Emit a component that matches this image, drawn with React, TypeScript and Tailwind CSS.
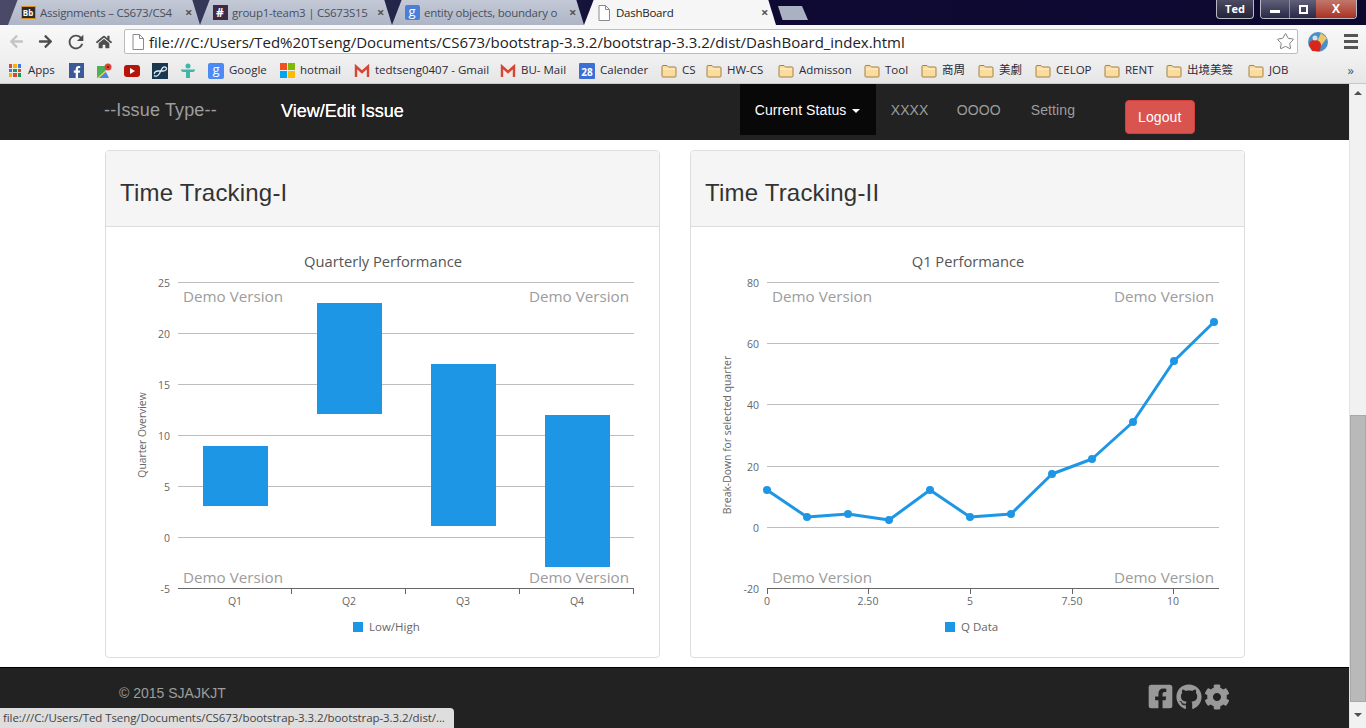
import { FaArrowLeft, FaArrowRight, FaCog, FaFacebookF, FaFacebookSquare, FaGithub, FaHome } from "react-icons/fa";
import { MdRefresh } from "react-icons/md";
import { Star } from "lucide-react";

const ui = "font-['Open_Sans','Noto_Sans_CJK_TC',sans-serif]";
const arial = "font-['Liberation_Sans',Arial,sans-serif]";

function DocIcon() {
  return (
    <svg width="14" height="16" viewBox="0 0 14 16" className="shrink-0">
      <path d="M2 .5h6.500L12.500 4.500V15.500H2Z" fill="#fff" stroke="#8a8a8a" />
      <path d="M8.500 .5V4.500H12.500" fill="none" stroke="#8a8a8a" />
    </svg>
  );
}

function Folder() {
  return (
    <svg width="16" height="16" viewBox="0 0 16 16">
      <path d="M1 3.500a1 1 0 0 1 1-1h4l1.500 1.500H14a1 1 0 0 1 1 1v8a1 1 0 0 1-1 1H2a1 1 0 0 1-1-1Z" fill="#fbdc9c" stroke="#a38348" />
      <path d="M2 6h12" stroke="#fff3d2" />
    </svg>
  );
}

function GmailM() {
  return (
    <svg width="16" height="16" viewBox="0 0 16 16">
      <path d="M2 3h12v11H2z" fill="#eee9e4" />
      <path d="M2 14V3.500L8 9l6-5.500V14" fill="none" stroke="#d44638" strokeWidth="2.400" />
    </svg>
  );
}

function Tab({ icon, label, active }: { icon: React.ReactNode; label: string; active?: boolean }) {
  return (
    <div
      className={
        "flex w-[192px] h-[25px] items-center pl-[12px] [clip-path:polygon(0_100%,5%_0,96%_0,100%_100%)] " +
        (active ? "bg-[#f6f6f6] text-[#222]" : "bg-gradient-to-b from-[#c3c9d6] to-[#aeb5c6] text-[#48505e]")
      }
    >
      <div className="w-[16px] h-[16px] shrink-0 flex items-center justify-center">{icon}</div>
      <div className="ml-[4px] w-[140px] shrink-0 overflow-hidden whitespace-nowrap text-[11.500px] tracking-[-0.25px] leading-[25px]">{label}</div>
      <div className="ml-[5px] text-[13px] font-bold text-[#555] leading-none">×</div>
    </div>
  );
}

const folders = [
  { label: "CS", w: "w-[12px]" },
  { label: "HW-CS", w: "w-[39px]" },
  { label: "Admisson", w: "w-[53px]" },
  { label: "Tool", w: "w-[24px]" },
  { label: "商周", w: "w-[24px]" },
  { label: "美劇", w: "w-[24px]" },
  { label: "CELOP", w: "w-[36px]" },
  { label: "RENT", w: "w-[29px]" },
  { label: "出境美簽", w: "w-[49px]" },
  { label: "JOB", w: "w-[20px]" },
];

function Bookmark({ icon, label, w }: { icon: React.ReactNode; label?: string; w?: string }) {
  return (
    <div className="flex items-center gap-[5px] shrink-0">
      <div className="w-[16px] h-[16px] flex items-center justify-center">{icon}</div>
      {label && <div className={"whitespace-nowrap text-[11.500px] leading-[16px] -mt-[2px] text-[#2a2a3a] " + w}>{label}</div>}
    </div>
  );
}

function BrowserChrome() {
  return (
    <div className={ui}>
      {/* title bar + tabs */}
      <div className="h-[25px] flex justify-between bg-gradient-to-r from-[#4a4a68] via-[#0e0a33] to-[#0c0830]">
        <div className="flex pl-[8px] items-end">
          <Tab
            label="Assignments – CS673/CS4"
            icon={<div className="w-[15px] h-[13px] bg-[#2b2b2b] border border-[#d9931e] text-white text-[8px] font-bold leading-[11px] text-center">Bb</div>}
          />
          <Tab
            label="group1-team3 | CS673S15"
            icon={<div className="w-[15px] h-[15px] bg-[#3f2a45] text-white text-[12px] font-bold leading-[15px] text-center">#</div>}
          />
          <Tab
            label="entity objects, boundary o"
            icon={<div className="w-[15px] h-[15px] bg-[#4a7fd8] rounded-[2px] text-white text-[13px] leading-[12px] text-center">g</div>}
          />
          <Tab label="DashBoard" active icon={<DocIcon />} />
          <div className="ml-[2px] w-[30px] h-[14px] mb-[5px] bg-[#aab1c2] [clip-path:polygon(0_0,80%_0,100%_100%,15%_100%)]" />
        </div>
        <div className="flex items-start pr-[9px] gap-[6px]">
          <div className="w-[38px] h-[19px] rounded-b-[4px] border border-t-0 border-[#b9b9c6] bg-gradient-to-b from-[#4c4c62] to-[#23233a] text-white text-[11px] font-bold text-center leading-[17px]">Ted</div>
          <div className="flex h-[19px] w-[97px] rounded-b-[4px] border border-t-0 border-[#b9b9c6] overflow-hidden">
            <div className="w-[28px] bg-gradient-to-b from-[#60607a] to-[#2a2a48] flex items-center justify-center">
              <div className="w-[10px] h-[3px] bg-white mt-[5px]" />
            </div>
            <div className="w-[27px] bg-gradient-to-b from-[#60607a] to-[#2a2a48] border-l border-[#8a8a9a] flex items-center justify-center">
              <div className="w-[9px] h-[9px] border-2 border-white" />
            </div>
            <div className="flex-1 bg-gradient-to-b from-[#c2766a] to-[#a83022] text-white text-[12px] font-bold text-center leading-[17px]">X</div>
          </div>
        </div>
      </div>

      {/* toolbar */}
      <div className="h-[33px] bg-gradient-to-b from-[#f8f8f8] to-[#f0f0f0] flex items-center pl-[9px] pr-[8px]">
        <div className="flex items-center gap-[14px] w-[115px]">
          <FaArrowLeft size={15} className="text-[#c4c4c4]" />
          <FaArrowRight size={15} className="text-[#4d4d4d]" />
          <MdRefresh size={22} className="text-[#4d4d4d] -mx-[2px]" />
          <FaHome size={16} className="text-[#4d4d4d] -ml-[3px]" />
        </div>
        <div className="w-[1174px] h-[25px] bg-white border border-[#bcbcbc] rounded-[2px] flex items-center pl-[6px] pr-[2px] justify-between">
          <div className="flex items-center gap-[4px] min-w-0">
            <DocIcon />
            <div className="text-[15px] tracking-[-0.02px] leading-[22px] mt-[1px] text-[#222] whitespace-nowrap">
              file:///C:/Users/Ted%20Tseng/Documents/CS673/bootstrap-3.3.2/bootstrap-3.3.2/dist/DashBoard_index.html
            </div>
          </div>
          <Star size={19} strokeWidth={1.200} className="text-[#777]" />
        </div>
        <svg width="20" height="20" viewBox="0 0 20 20" className="ml-[10px] shrink-0">
          <circle cx="10" cy="10" r="10" fill="#4a90c8" />
          <path d="M13 1 19 6 8 20 5 18Z" fill="#e8c86a" />
          <path d="M1 13a6 5 0 0 1 12 0l-1 6H4Z" fill="#d8261c" />
          <circle cx="7" cy="6" r="2.500" fill="#cfe2f0" />
        </svg>
        <div className="ml-[16px] flex flex-col gap-[3px]">
          <div className="w-[14px] h-[3px] bg-[#555]" />
          <div className="w-[14px] h-[3px] bg-[#555]" />
          <div className="w-[14px] h-[3px] bg-[#555]" />
        </div>
      </div>

      {/* bookmarks */}
      <div className="h-[26px] bg-gradient-to-b from-[#f0f0f0] to-[#e6e6e6] border-b border-[#c8c8c8] flex items-center pl-[7px] pr-[12px] gap-[12px] relative">
        <Bookmark
          label="Apps"
          w="w-[28px]"
          icon={
            <div className="grid grid-cols-3 gap-[1px]">
              <div className="w-[3.500px] h-[3.500px] bg-[#e0453a]" />
              <div className="w-[3.500px] h-[3.500px] bg-[#f4b400]" />
              <div className="w-[3.500px] h-[3.500px] bg-[#3b78e7]" />
              <div className="w-[3.500px] h-[3.500px] bg-[#3b78e7]" />
              <div className="w-[3.500px] h-[3.500px] bg-[#0f9d58]" />
              <div className="w-[3.500px] h-[3.500px] bg-[#e0453a]" />
              <div className="w-[3.500px] h-[3.500px] bg-[#f4b400]" />
              <div className="w-[3.500px] h-[3.500px] bg-[#e0453a]" />
              <div className="w-[3.500px] h-[3.500px] bg-[#0f9d58]" />
            </div>
          }
        />
        <Bookmark icon={<div className="w-[15px] h-[15px] bg-[#3b5998] flex items-end justify-end pr-[1px]"><FaFacebookF size={12} className="text-white" /></div>} />
        <Bookmark
          icon={
            <svg width="16" height="16" viewBox="0 0 16 16">
              <path d="M1 3h9v12H1z" fill="#4fae5b" />
              <path d="M1 15 10 7v8z" fill="#f4d03f" />
              <path d="M3 15l7-6 3 6z" fill="#4a86e8" />
              <circle cx="12" cy="4" r="3.500" fill="#db4437" />
              <circle cx="12" cy="4" r="1.200" fill="#8f1f16" />
            </svg>
          }
        />
        <Bookmark
          icon={
            <svg width="16" height="16" viewBox="0 0 16 16">
              <rect y="2" width="16" height="12" rx="3" fill="#b5140a" />
              <path d="M6 5v6l5-3z" fill="#fff" />
            </svg>
          }
        />
        <Bookmark
          icon={
            <svg width="16" height="16" viewBox="0 0 16 16">
              <rect width="16" height="16" fill="#17384f" />
              <path d="M2 12.500c2 1.500 4 .5 5.500-2l2-4c1-2 3-3.500 4.500-2s-.5 3.500-3 3.500H6c-2.500 0-4 1.500-3.500 3" fill="none" stroke="#e4eef4" strokeWidth="1.300" />
            </svg>
          }
        />
        <Bookmark
          icon={
            <svg width="16" height="16" viewBox="0 0 16 16" fill="#3fb6a8">
              <circle cx="8" cy="3" r="2.500" />
              <path d="M1 6.500h14a2.500 2.500 0 0 1-2.500 2.500H10v6H6V9H3.500A2.500 2.500 0 0 1 1 6.500Z" />
            </svg>
          }
        />
        <Bookmark label="Google" w="w-[38px]" icon={<div className="w-[16px] h-[16px] bg-[#4c8bf5] rounded-[2px] text-white text-[13px] leading-[13px] text-center">g</div>} />
        <Bookmark
          label="hotmail"
          w="w-[42px]"
          icon={
            <div className="grid grid-cols-2 gap-[1px]">
              <div className="w-[7px] h-[7px] bg-[#f25022]" />
              <div className="w-[7px] h-[7px] bg-[#7fba00]" />
              <div className="w-[7px] h-[7px] bg-[#00a4ef]" />
              <div className="w-[7px] h-[7px] bg-[#ffb900]" />
            </div>
          }
        />
        <Bookmark label="tedtseng0407 - Gmail" w="w-[113px]" icon={<GmailM />} />
        <Bookmark label="BU- Mail" w="w-[46px]" icon={<GmailM />} />
        <Bookmark label="Calender" w="w-[49px]" icon={<div className="w-[16px] h-[16px] bg-[#3b6fd6] text-white text-[10px] font-bold leading-[19px] text-center rounded-[1px]">28</div>} />
        {folders.map(f => (
          <Bookmark key={f.label} label={f.label} w={f.w} icon={<Folder />} />
        ))}
        <div className="ml-auto text-[13px] text-[#555]">»</div>
      </div>
    </div>
  );
}

function Navbar() {
  return (
    <div className={"h-[56px] bg-[#222] flex items-start pl-[104px] text-[#9d9d9d] " + arial}>
      <div className="w-[177px] text-[18px] tracking-[0.15px] leading-[52px]">--Issue Type--</div>
      <div className="text-[18px] leading-[54px] text-white [text-shadow:0_0_0.4px_#fff]">View/Edit Issue</div>
      <div className="ml-[336px] flex text-[14px] tracking-[0.1px]">
        <div className="w-[136px] h-[51px] bg-[#080808] text-white pl-[15px] pt-[1px] flex items-center gap-[6px]">
          Current Status
          <div className="w-0 h-0 border-x-4 border-x-transparent border-t-4 border-t-white mt-[2px]" />
        </div>
        <div className="w-[66px] pl-[15px] leading-[53px]">XXXX</div>
        <div className="w-[74px] pl-[15px] leading-[53px]">OOOO</div>
        <div className="w-[109px] pl-[15px] leading-[53px]">Setting</div>
        <button className="mt-[16px] w-[70px] h-[34px] bg-[#d9534f] text-white rounded-[4px] border border-[#d43f3a] text-[14px]">Logout</button>
      </div>
    </div>
  );
}

const chartText = "font-['Open_Sans',sans-serif]";

function Grid({ lines, x1, x2, axis }: { lines: { y: number; label: string }[]; x1: number; x2: number; axis: number }) {
  return (
    <>
      {lines.map(l => (
        <g key={l.label}>
          {l.y !== axis && <line x1={x1} x2={x2} y1={l.y + 0.5} y2={l.y + 0.5} stroke="#bdbdbd" />}
          <text x={x1 - 8} y={l.y + 5} textAnchor="end" fontSize="10.500" fill="#666">{l.label}</text>
        </g>
      ))}
      <line x1={x1} x2={x2} y1={axis + 0.5} y2={axis + 0.5} stroke="#666" />
    </>
  );
}

function Watermarks({ left, right }: { left: number; right: number }) {
  return (
    <g fontSize="15.200" fill="#9c9c9c">
      <text x={left} y={302}>Demo Version</text>
      <text x={right} y={302} textAnchor="end">Demo Version</text>
      <text x={left} y={583}>Demo Version</text>
      <text x={right} y={583} textAnchor="end">Demo Version</text>
    </g>
  );
}

function BarChart() {
  const lines = [
    { y: 282, label: "25" },
    { y: 333, label: "20" },
    { y: 384, label: "15" },
    { y: 435, label: "10" },
    { y: 486, label: "5" },
    { y: 537, label: "0" },
    { y: 588, label: "-5" },
  ];
  const bars = [
    { x: 203, top: 446, bottom: 506, label: "Q1" },
    { x: 317, top: 303, bottom: 414, label: "Q2" },
    { x: 431, top: 364, bottom: 526, label: "Q3" },
    { x: 545, top: 415, bottom: 567, label: "Q4" },
  ];
  return (
    <svg width="553" height="430" viewBox="106 227 553 430" className={"block " + chartText}>
      <text x="383" y="267" textAnchor="middle" fontSize="14.700" fill="#555">Quarterly Performance</text>
      <Grid lines={lines} x1={178} x2={634} axis={588} />
      <Watermarks left={183} right={629} />
      {bars.map(b => (
        <g key={b.label}>
          <rect x={b.x} y={b.top} width="65" height={b.bottom - b.top} fill="#1e96e6" />
          <line x1={b.x + 88.500} x2={b.x + 88.500} y1="588" y2="594" stroke="#666" />
          <text x={b.x + 32} y="605" textAnchor="middle" fontSize="10.500" fill="#666">{b.label}</text>
        </g>
      ))}
      <text transform="translate(146 435) rotate(-90)" textAnchor="middle" fontSize="10.300" fill="#666">Quarter Overview</text>
      <rect x="353" y="622" width="10" height="10" fill="#1e96e6" />
      <text x="369" y="631" fontSize="11.500" fill="#666">Low/High</text>
    </svg>
  );
}

function LineChart() {
  const lines = [
    { y: 282, label: "80" },
    { y: 343, label: "60" },
    { y: 404, label: "40" },
    { y: 466, label: "20" },
    { y: 527, label: "0" },
    { y: 588, label: "-20" },
  ];
  const pts = [
    [767, 490], [807, 517], [848, 514], [889, 520], [930, 490], [970, 517],
    [1011, 514], [1052, 474], [1092, 459], [1133, 422], [1174, 361], [1214, 322],
  ];
  const xLabels = [
    { x: 767, label: "0" },
    { x: 868, label: "2.50" },
    { x: 970, label: "5" },
    { x: 1072, label: "7.50" },
    { x: 1173, label: "10" },
  ];
  return (
    <svg width="553" height="430" viewBox="691 227 553 430" className={"block " + chartText}>
      <text x="968" y="267" textAnchor="middle" fontSize="14.700" fill="#555">Q1 Performance</text>
      <Grid lines={lines} x1={767} x2={1219} axis={588} />
      <Watermarks left={772} right={1214} />
      {xLabels.map(t => (
        <g key={t.label}>
          <line x1={t.x + 0.5} x2={t.x + 0.5} y1="588" y2="594" stroke="#666" />
          <text x={t.x} y="605" textAnchor="middle" fontSize="10.500" fill="#666">{t.label}</text>
        </g>
      ))}
      <polyline points={pts.map(p => p.join(",")).join(" ")} fill="none" stroke="#1e96e6" strokeWidth="3" strokeLinejoin="round" />
      {pts.map(p => (
        <circle key={p[0]} cx={p[0]} cy={p[1]} r="4" fill="#1e96e6" />
      ))}
      <text transform="translate(731 435) rotate(-90)" textAnchor="middle" fontSize="10.400" fill="#666">Break-Down for selected quarter</text>
      <rect x="945" y="622" width="10" height="10" fill="#1e96e6" />
      <text x="961" y="631" fontSize="11.500" fill="#666">Q Data</text>
    </svg>
  );
}

function Panel({ title, children }: { title: string; children: React.ReactNode }) {
  return (
    <div className="w-[555px] h-[508px] bg-white border border-[#ddd] rounded-[4px] overflow-hidden">
      <div className={"h-[76px] bg-[#f5f5f5] border-b border-[#ddd] px-[14px] text-[24px] tracking-[0.2px] leading-[84px] text-[#333] " + arial}>{title}</div>
      {children}
    </div>
  );
}

function Scrollbar() {
  return (
    <div className="w-[17px] bg-[#f1f1f1] border-l border-[#e4e4e4] flex flex-col items-center">
      <div className="h-[17px] flex items-center justify-center">
        <div className="w-0 h-0 border-x-[4px] border-x-transparent border-b-[4px] border-b-[#505050]" />
      </div>
      <div className="h-[314px] shrink-0" />
      <div className="w-full h-[287px] bg-[#b9b9b9] border border-[#a8a8a8]" />
      <div className="flex-1 flex items-center justify-center">
        <div className="w-0 h-0 border-x-[4px] border-x-transparent border-t-[4px] border-t-[#505050]" />
      </div>
    </div>
  );
}

export default function App() {
  return (
    <div className="relative w-[1366px] h-[728px] overflow-hidden flex flex-col bg-white">
      <BrowserChrome />
      <div className="flex-1 flex min-h-0">
        <div className="flex-1 flex flex-col min-w-0">
          <Navbar />
          <div className="h-[527px] flex gap-[30px] pl-[105px] pt-[10px] bg-white">
            <Panel title="Time Tracking-I">
              <BarChart />
            </Panel>
            <Panel title="Time Tracking-II">
              <LineChart />
            </Panel>
          </div>
          <div className={"flex-1 bg-[#222] border-t border-black flex items-start justify-between pl-[119px] pr-[119px] pt-[15px] text-[14px] text-[#9d9d9d] " + arial}>
            <div>© 2015 SJAJKJT</div>
            <div className="flex items-center gap-[2px] text-[#999]">
              <FaFacebookSquare size={27} />
              <FaGithub size={26} />
              <FaCog size={26} />
            </div>
          </div>
        </div>
        <Scrollbar />
      </div>
      <div className={"absolute left-0 bottom-0 w-[454px] h-[20px] bg-[#dedede] rounded-tr-[4px] pl-[3px] text-[11.500px] tracking-[-0.08px] leading-[20px] text-[#444] whitespace-nowrap overflow-hidden " + ui}>
        file:///C:/Users/Ted Tseng/Documents/CS673/bootstrap-3.3.2/bootstrap-3.3.2/dist/...
      </div>
    </div>
  );
}
